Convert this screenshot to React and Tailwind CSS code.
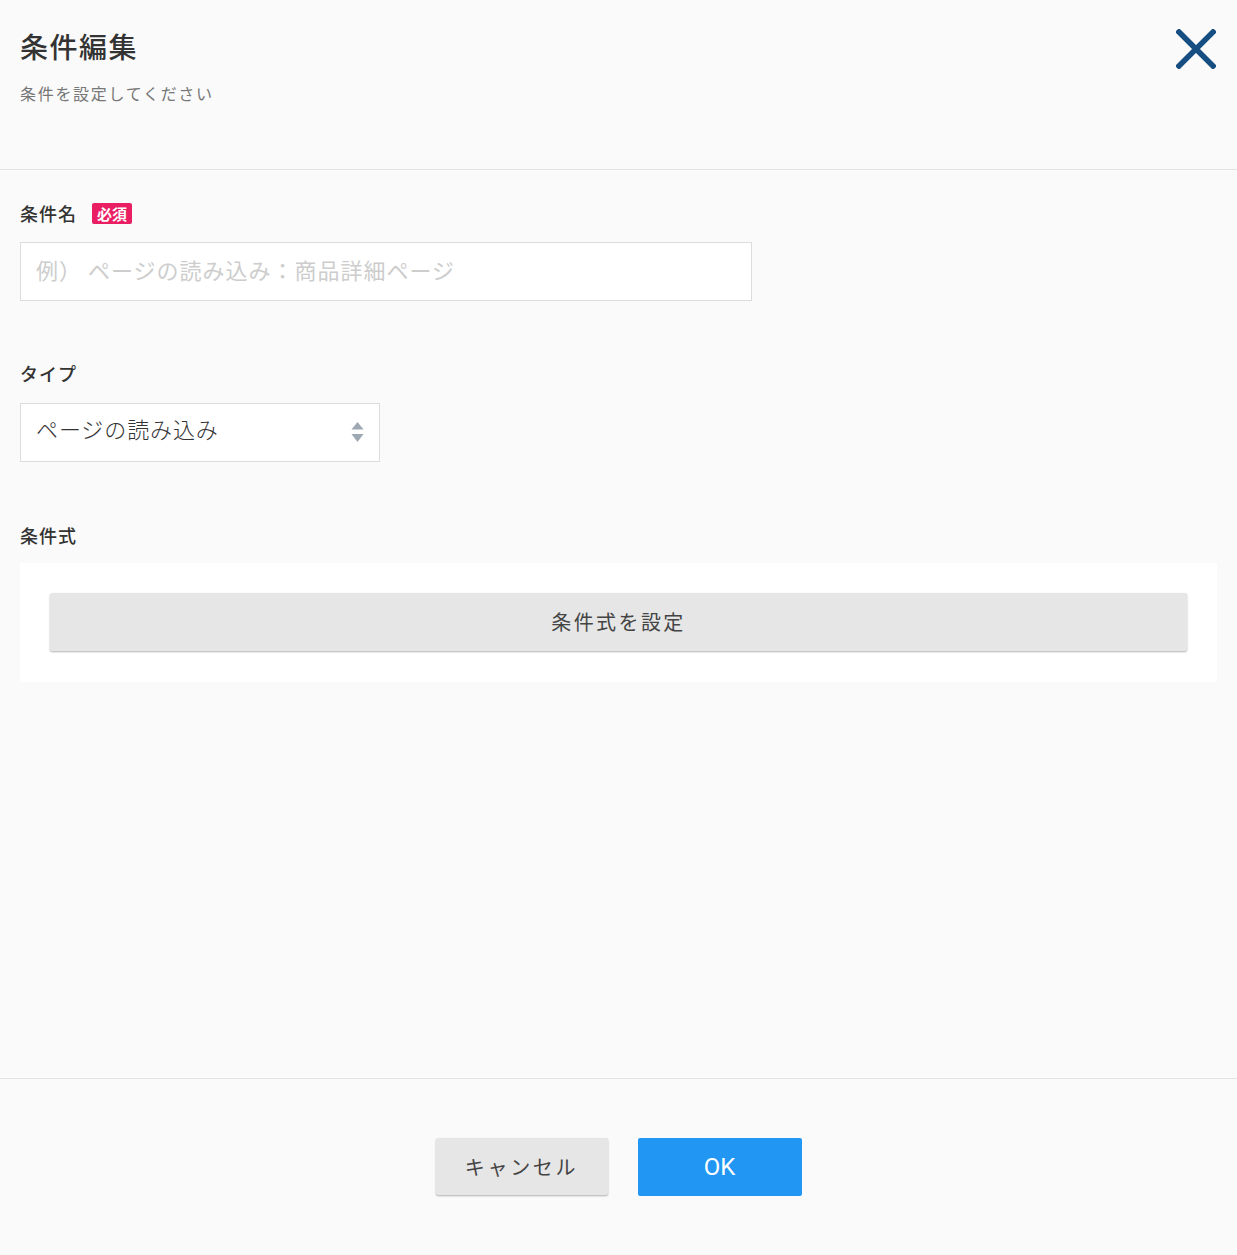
import React from 'react';

const labelClass = "text-[18px] leading-[26px] font-medium text-[#333] tracking-[1px]";

function CloseIcon() {
  return (
    <svg width="40" height="40" viewBox="0 0 40 40" fill="none">
      <path d="M3 3 L37 37 M37 3 L3 37" stroke="#174e81" strokeWidth="5.5" strokeLinecap="square" />
    </svg>
  );
}

function SelectArrows() {
  return (
    <svg width="13" height="22" viewBox="0 0 13 22" fill="#9ea8b3">
      <path d="M6.5 0 L12.5 7.5 L0.5 7.5 Z" />
      <path d="M0.5 12 L12.5 12 L6.5 20 Z" />
    </svg>
  );
}

export default function App() {
  return (
    <div className="h-[1255px] flex flex-col bg-[#fafafa] font-['Noto_Sans_CJK_JP','Noto_Sans',sans-serif]">
      {/* Header */}
      <div className="h-[170px] border-b border-[#e3e3e3] flex justify-between pl-5 pr-[21px] pt-[28px]">
        <div>
          <h1 className="text-[28px] leading-[36px] font-medium text-[#333] tracking-[1.5px]">条件編集</h1>
          <p className="mt-[17px] text-[16px] leading-[24px] text-[#777] tracking-[1.7px]">条件を設定してください</p>
        </div>
        <button className="mt-[1px] h-[40px] w-[40px] flex items-center justify-center">
          <CloseIcon />
        </button>
      </div>

      {/* Body */}
      <div className="flex-1 px-5 pt-[30px]">
        <div className="flex items-center gap-[15px]">
          <span className={labelClass}>条件名</span>
          <span className="h-[21px] px-[5px] rounded-[2px] bg-[#e91e63] text-white text-[15px] leading-[21px] font-bold">必須</span>
        </div>
        <input
          className="mt-[16px] block w-[732px] h-[59px] border border-[#dcdcdc] bg-white px-[15px] pb-[5px] text-[22px] tracking-[1px] text-[#333] placeholder:text-[#cdcdcd] outline-none"
          placeholder="例） ページの読み込み：商品詳細ページ"
        />

        <div className={`mt-[59px] ${labelClass}`}>タイプ</div>
        <div className="mt-[17px] w-[360px] h-[59px] border border-[#dcdcdc] bg-white flex items-center justify-between pl-[15px] pr-[15px]">
          <span className="pb-[8px] text-[22px] tracking-[0.9px] font-light text-[#333]">ページの読み込み</span>
          <SelectArrows />
        </div>

        <div className={`mt-[60px] ${labelClass}`}>条件式</div>
        <div className="mt-[15px] bg-white px-[30px] pt-[30px] pb-[31px]">
          <button className="w-full h-[58px] rounded-[2px] bg-[#e6e6e6] shadow-[0_1px_2px_rgba(0,0,0,0.3)] text-[20px] tracking-[2.4px] text-[#444]">
            条件式を設定
          </button>
        </div>
      </div>

      {/* Footer */}
      <div className="h-[177px] border-t border-[#e3e3e3] flex justify-center items-start gap-[30px] pt-[59px]">
        <button className="w-[172px] h-[57px] rounded-[2px] bg-[#e6e6e6] shadow-[0_1px_2px_rgba(0,0,0,0.3)] text-[20px] tracking-[2.7px] text-[#444]">
          キャンセル
        </button>
        <button className="w-[164px] h-[58px] rounded-[2px] bg-[#2196f3] text-white text-[24px] font-['Roboto',sans-serif]">
          OK
        </button>
      </div>
    </div>
  );
}
